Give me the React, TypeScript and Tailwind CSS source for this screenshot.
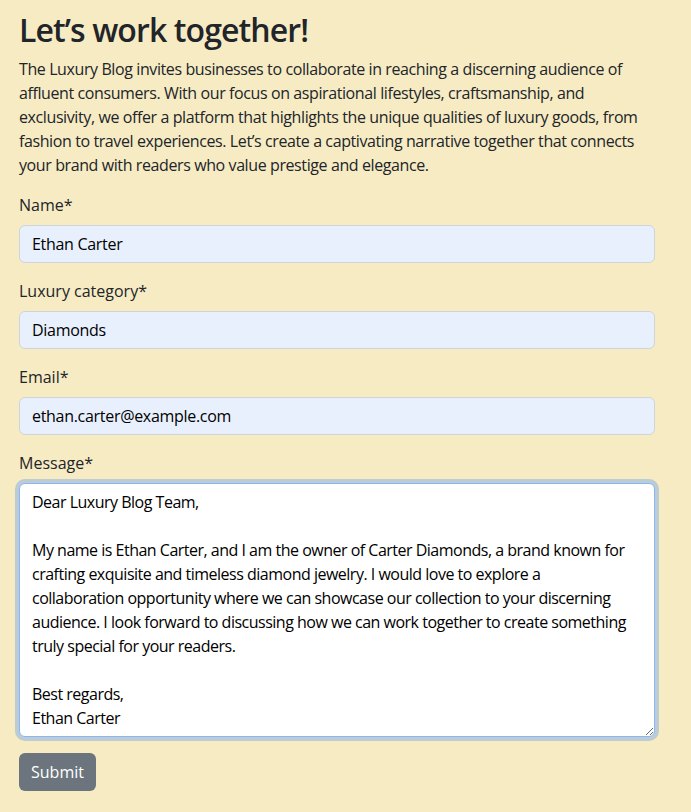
import React from 'react';

const font = { fontFamily: '"Open Sans", "Noto Sans", sans-serif' };

const Field: React.FC<{ label: string; value: string; type?: string }> = ({ label, value, type = 'text' }) => (
  <div className="mb-4">
    <label className="block mb-2 text-[16px] leading-6 text-[#212529]">{label}</label>
    <input
      type={type}
      defaultValue={value}
      className="block w-full h-[38px] px-3 rounded-[6px] border border-[#cfd4da] bg-[#e8f0fe] text-[16px] text-black outline-none tracking-[-0.3px]"
      style={font}
    />
  </div>
);

const message = `Dear Luxury Blog Team,

My name is Ethan Carter, and I am the owner of Carter Diamonds, a brand known for
crafting exquisite and timeless diamond jewelry. I would love to explore a
collaboration opportunity where we can showcase our collection to your discerning
audience. I look forward to discussing how we can work together to create something
truly special for your readers.

Best regards,
Ethan Carter`;

export default function App() {
  return (
    <div className="min-h-screen bg-[#f7ebc4] text-[#212529]" style={font}>
      <div className="w-[674px] px-[19px] pt-[10px] pb-6">
        <h1 className="text-[32px] leading-[39px] font-semibold mb-2 tracking-[-0.9px]">Let’s work together!</h1>
        <p className="text-[16px] leading-6 mb-4 tracking-[-0.4px]">
          The Luxury Blog invites businesses to collaborate in reaching a discerning audience of
          <br />
          affluent consumers. With our focus on aspirational lifestyles, craftsmanship, and
          <br />
          exclusivity, we offer a platform that highlights the unique qualities of luxury goods, from
          <br />
          fashion to travel experiences. Let’s create a captivating narrative together that connects
          <br />
          your brand with readers who value prestige and elegance.
        </p>
        <form onSubmit={(e) => e.preventDefault()}>
          <Field label="Name*" value="Ethan Carter" />
          <Field label="Luxury category*" value="Diamonds" />
          <Field label="Email*" value="ethan.carter@example.com" type="email" />
          <div className="mb-4">
            <label className="block mb-2 text-[16px] leading-6">Message*</label>
            <textarea
              defaultValue={message}
              rows={10}
              className="block w-full h-[254px] px-3 py-[6px] rounded-[6px] border border-[#86b7fe] bg-white text-[16px] leading-6 text-black outline-none shadow-[0_0_0_4px_rgba(13,110,253,0.25)] tracking-[-0.5px]"
              style={font}
            />
          </div>
          <button
            type="submit"
            className="h-[38px] px-3 rounded-[6px] bg-[#6c757d] text-white text-[16px] leading-6"
          >
            Submit
          </button>
        </form>
      </div>
    </div>
  );
}
